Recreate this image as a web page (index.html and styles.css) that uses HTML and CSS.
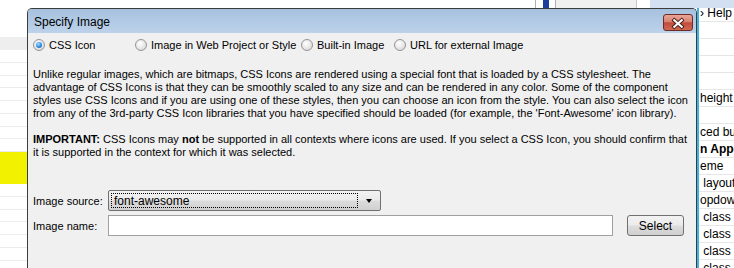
FILE: index.html
```html
<!DOCTYPE html>
<html lang="en">
<head>
  <meta charset="UTF-8">
  <title>Specify Image</title>
  <link rel="stylesheet" href="styles.css">
</head>
<body>
  <div class="screen">

    <!-- strip of the app behind the dialog -->
    <div class="top-strip">
      <div class="ts-white"></div>
      <div class="ts-scroll"><span class="thumb"></span></div>
      <div class="ts-gray"></div>
      <div class="ts-gap"></div>
      <div class="ts-blue"></div>
    </div>

    <div class="left-list">
      <div class="lrow tall"></div>
      <div class="lrow shade"></div>
      <div class="lrow line"></div>
      <div class="lrow line"></div>
      <div class="lrow line"></div>
      <div class="lrow line"></div>
      <div class="lrow line"></div>
      <div class="lrow line"></div>
      <div class="lrow line"></div>
      <div class="lrow line"></div>
      <div class="lrow mark"></div>
      <div class="lrow line"></div>
      <div class="lrow line"></div>
      <div class="lrow line"></div>
      <div class="lrow line"></div>
      <div class="lrow line"></div>
      <div class="lrow line"></div>
    </div>

    <!-- dialog -->
    <div class="dialog">
      <div class="title-bar">
        <span class="title">Specify Image</span>
        <button class="close" type="button">
          <svg width="30" height="17" viewBox="0 0 30 17">
            <path d="M11 5 L19 12 M19 5 L11 12" stroke="#4a2018" stroke-width="4.2" stroke-linecap="square"/>
            <path d="M11 5 L19 12 M19 5 L11 12" stroke="#ffffff" stroke-width="2.2" stroke-linecap="square"/>
          </svg>
        </button>
      </div>

      <div class="dialog-body">
        <div class="radios">
          <label class="opt opt-css"><span class="radio checked"></span>CSS Icon</label>
          <label class="opt opt-web"><span class="radio"></span>Image in Web Project or Style</label>
          <label class="opt opt-builtin"><span class="radio"></span>Built-in Image</label>
          <label class="opt"><span class="radio"></span>URL for external Image</label>
        </div>

        <p class="info">Unlike regular images, which are bitmaps, CSS Icons are rendered using a special font that is loaded by a CSS stylesheet. The<br>
        advantage of CSS Icons is that they can be smoothly scaled to any size and can be rendered in any color. Some of the component<br>
        styles use CSS Icons and if you are using one of these styles, then you can choose an icon from the style. You can also select the icon<br>
        from any of the 3rd-party CSS Icon libraries that you have specified should be loaded (for example, the 'Font-Awesome' icon library).</p>

        <p class="info"><b>IMPORTANT:</b> CSS Icons may <b>not</b> be supported in all contexts where icons are used. If you select a CSS Icon, you should confirm that<br>
        it is supported in the context for which it was selected.</p>

        <div class="field-row source-row">
          <span class="field-label">Image source:</span>
          <div class="combo">
            <span class="combo-value">font-awesome</span>
            <span class="combo-arrow"></span>
          </div>
        </div>

        <div class="field-row name-row">
          <span class="field-label">Image name:</span>
          <input class="name-input" type="text">
          <button class="select-btn" type="button">Select</button>
        </div>
      </div>
    </div>

    <div class="right-list">
      <div class="rows">
        <div class="rrow">&rsaquo; Help</div>
        <div class="rrow"></div>
        <div class="rrow"></div>
        <div class="rrow"></div>
        <div class="rrow"></div>
        <div class="rrow">height</div>
        <div class="rrow"></div>
        <div class="rrow">ced bul</div>
        <div class="rrow bold">n Appe</div>
        <div class="rrow">eme</div>
        <div class="rrow">&nbsp;layout</div>
        <div class="rrow">opdown</div>
        <div class="rrow">&nbsp;class</div>
        <div class="rrow">&nbsp;class h</div>
        <div class="rrow">&nbsp;class p</div>
        <div class="rrow">&nbsp;class c</div>
      </div>
    </div>

  </div>
</body>
</html>
```

FILE: styles.css
```css
body {
  margin: 0;
  font-family: "Liberation Sans", Arial, sans-serif;
  font-size: 11px;
  color: #000;
  background: #fff;
}

.screen {
  width: 734px;
  height: 268px;
  overflow: hidden;
  display: grid;
  grid-template-columns: 27px 670px 1fr;
  grid-template-rows: 8px 260px;
}

/* top strip */
.top-strip {
  grid-column: 1 / 4;
  display: flex;
}

.ts-white {
  width: 535px;
  background: #fff;
}

.ts-scroll {
  width: 19px;
  border-left: 1px solid #b0b0b0;
  border-right: 1px solid #b0b0b0;
  background: #fff;
  display: flex;
  justify-content: center;
}

.ts-scroll .thumb {
  width: 6px;
  background: #1c3f9c;
}

.ts-gray {
  width: 80px;
  background: #f0f0f0;
  border-right: 1px solid #c8c8c8;
}

.ts-gap {
  width: 13px;
  background: #fff;
}

.ts-blue {
  flex: 1;
  background: #d3e0f1;
}

/* left list behind */
.left-list {
  overflow: hidden;
}

.lrow {
  height: 11.75px;
}

.lrow.tall {
  height: 29px;
}

.lrow.shade {
  height: 13px;
  background: #eeeeee;
}

.lrow.line {
  border-bottom: 1px solid #ececec;
}

.lrow.mark {
  height: 32px;
  background: #f2f200;
}

/* dialog */
.dialog {
  background: #f0f0f0;
  border: 1px solid #3c3c3c;
  border-bottom: none;
  border-radius: 5px 5px 0 0;
  display: flex;
  flex-direction: column;
  overflow: hidden;
}

.title-bar {
  height: 24px;
  background: linear-gradient(#a6c1df, #bdd2ea);
  display: flex;
  align-items: center;
  justify-content: space-between;
  padding: 0 3px 0 6px;
}

.title {
  font-size: 12px;
  margin-top: 1px;
}

.close {
  width: 30px;
  height: 17px;
  padding: 0;
  margin-top: 2px;
  border: 1px solid #6e2b22;
  border-radius: 3px;
  background: linear-gradient(#e9a597 0%, #d98272 45%, #c24b3a 52%, #d06a55 100%);
  display: flex;
}

.dialog-body {
  flex: 1;
  padding: 5px 6px 0 5px;
}

.radios {
  display: flex;
  align-items: center;
  height: 14px;
}

.opt {
  display: flex;
  align-items: center;
  gap: 4px;
  white-space: nowrap;
}

.opt-css {
  width: 102px;
}

.opt-web {
  width: 166px;
}

.opt-builtin {
  width: 93px;
}

.radio {
  width: 12px;
  height: 12px;
  box-sizing: border-box;
  border-radius: 50%;
  border: 1px solid #959595;
  background: radial-gradient(circle at 40% 35%, #ffffff 0%, #e4e4e4 60%, #cfcfcf 100%);
  display: flex;
  align-items: center;
  justify-content: center;
}

.radio.checked::after {
  content: "";
  width: 6px;
  height: 6px;
  border-radius: 50%;
  background: radial-gradient(circle at 40% 35%, #9fe0ff 0%, #2d8be0 55%, #0c4d9c 100%);
}

.info {
  margin: 16px 0 0;
  line-height: 13px;
  white-space: nowrap;
}

.info + .info {
  margin-top: 13px;
}

.field-row {
  display: flex;
  align-items: center;
}

.source-row {
  margin-top: 31px;
}

.name-row {
  margin-top: 4px;
}

.field-label {
  width: 75px;
}

.combo {
  width: 273px;
  height: 21px;
  box-sizing: border-box;
  border: 1px solid #707070;
  border-radius: 2px;
  background: linear-gradient(#f2f2f2 0%, #ebebeb 48%, #dcdcdc 52%, #d0d0d0 100%);
  display: flex;
  align-items: center;
  padding: 2px;
}

.combo-value {
  flex: 1;
  height: 15px;
  line-height: 15px;
  box-sizing: border-box;
  border: 1px dotted #000;
  padding-left: 2px;
  font-size: 12px;
}

.combo-arrow {
  width: 0;
  height: 0;
  margin: 0 6px 0 8px;
  border-left: 3.5px solid transparent;
  border-right: 3.5px solid transparent;
  border-top: 4px solid #000;
}

.name-input {
  width: 505px;
  height: 21px;
  box-sizing: border-box;
  border: 1px solid #a0a0a0;
  background: #fff;
  margin: 0;
  padding: 0;
}

.select-btn {
  width: 57px;
  height: 21px;
  margin-left: 14px;
  padding: 0;
  border: 1px solid #707070;
  border-radius: 3px;
  background: linear-gradient(#f2f2f2 0%, #ebebeb 48%, #dddddd 52%, #cfcfcf 100%);
  font-family: "Liberation Sans", Arial, sans-serif;
  font-size: 12px;
  color: #000;
}

/* right list behind */
.right-list {
  border-left: 2px solid #3ab4e2;
  background: #fff;
  overflow: hidden;
  font-size: 12px;
}

.rows {
  margin-top: -3px;
}

.rrow {
  height: 17px;
  line-height: 16px;
  box-sizing: border-box;
  border-bottom: 1px solid #e6e6e6;
  padding-left: 1px;
  white-space: nowrap;
}

.rrow.bold {
  font-weight: bold;
}
```
